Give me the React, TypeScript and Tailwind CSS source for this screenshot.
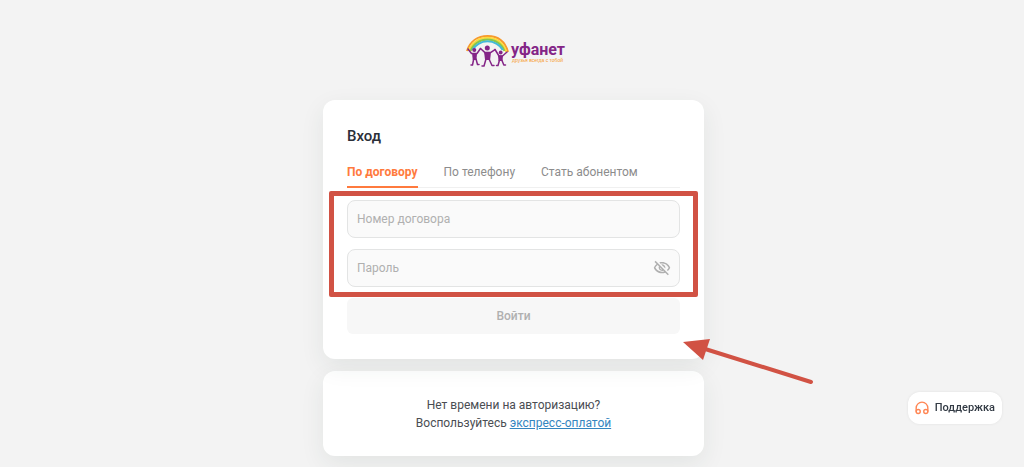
import { useState } from "react";
import clsx from "clsx";

const tabs = ["По договору", "По телефону", "Стать абонентом"];

function Logo() {
  return (
    <a href="#" aria-label="Уфанет" className="flex w-24 shrink-0">
      <svg viewBox="0 0 96 34" className="h-[34px] w-24 overflow-visible">
        <g fill="none" strokeWidth="2">
          <path d="M1 17C4 7 12 2 21.500 2S39 7 42 18" stroke="#f79a2c" />
          <path d="M2.800 17C5.500 8.500 13 3.800 21.500 3.800S37.500 8.500 40.200 18" stroke="#fddb3a" />
          <path d="M4.600 17C7 10 14 5.600 21.500 5.600S36 10 38.400 17" stroke="#8ac64a" />
          <path d="M6.400 16C9 11 15 7.300 21.500 7.300S34.500 11 36.800 16" stroke="#43b9d8" />
        </g>
        <g fill="#842587">
          <circle cx="8.300" cy="16" r="2" />
          <circle cx="21.300" cy="14" r="2.500" />
          <circle cx="34.700" cy="18.500" r="1.900" />
          <path d="M6 19h5l-.5 7H6.800z" />
          <path d="M18 18h7l-.9 8h-5z" />
          <path d="M32 21.500h5l-.5 5.500h-4z" />
        </g>
        <g fill="none" stroke="#842587" strokeWidth="1.500" strokeLinecap="round" strokeLinejoin="round">
          <path d="M2 15l3.500 4.500H11l3.500-5" />
          <path d="M7.700 25L6.500 31H5M10 25l1.500 5.500H13" />
          <path d="M14.500 14.500L19 18.600h5.500l4.500-3" />
          <path d="M20 25l-2 7h-2M23 25l3 6.500h2" />
          <path d="M29 15.500l4 6.500h3.500l4.500-4" />
          <path d="M33.500 26L32 31.500h-1.500M35.800 26l2 5H39.500" />
        </g>
        <text x="45" y="21" fontSize="16" fontWeight="700" fill="#842587" fontFamily="Roboto, sans-serif">
          уфанет
        </text>
        <text x="46" y="28" fontSize="5" fill="#f79a2c" fontFamily="'Liberation Sans', sans-serif">
          друзья всегда с тобой
        </text>
      </svg>
    </a>
  );
}

function EyeOffIcon() {
  return (
    <svg viewBox="0 0 24 24" className="size-[18px]" fill="currentColor">
      <path d="M12 6c3.790 0 7.170 2.130 8.820 5.500-.59 1.220-1.420 2.270-2.410 3.120l1.410 1.410c1.390-1.230 2.490-2.770 3.180-4.530C21.270 7.110 17 4 12 4c-1.270 0-2.490.2-3.640.57l1.650 1.650C10.660 6.090 11.320 6 12 6zm-1.070 1.140L13 9.210c.57.25 1.030.71 1.280 1.280l2.070 2.070c.08-.34.14-.7.14-1.070C16.500 9.010 14.480 7 12 7c-.37 0-.72.05-1.070.14zM2.010 3.870l2.680 2.680C3.060 7.830 1.770 9.530 1 11.500 2.730 15.890 7 19 12 19c1.520 0 2.980-.29 4.320-.82l3.420 3.420 1.410-1.410L3.420 2.450 2.010 3.870zm7.500 7.500l2.610 2.610c-.04.01-.08.02-.12.02-1.380 0-2.500-1.120-2.500-2.500 0-.05.01-.08.01-.13zm-3.400-3.400l1.750 1.750c-.23.55-.36 1.150-.36 1.780 0 2.480 2.020 4.500 4.500 4.500.63 0 1.230-.13 1.770-.36l.98.98c-.88.24-1.800.38-2.750.38-3.790 0-7.170-2.130-8.820-5.500.7-1.430 1.720-2.610 2.930-3.530z" />
    </svg>
  );
}

function SupportButton() {
  return (
    <button
      type="button"
      className="fixed right-[22px] bottom-[43px] flex h-8 items-center gap-1.5 rounded-xl bg-white px-[7px] text-[11px] font-medium text-[#333b45] shadow-[0_0_3px_rgba(0,0,0,0.08)]"
    >
      <svg viewBox="0 0 24 24" className="size-3.5" fill="none" stroke="#ff8654" strokeWidth="2.400" strokeLinecap="round" strokeLinejoin="round">
        <path d="M2 17.500V12a10 10 0 0 1 20 0v5.500" />
        <circle cx="5.500" cy="18" r="3.500" />
        <circle cx="18.500" cy="18" r="3.500" />
      </svg>
      Поддержка
    </button>
  );
}

export default function App() {
  const [activeTab, setActiveTab] = useState(0);
  const [showPassword, setShowPassword] = useState(false);

  return (
    <div className="min-h-screen bg-[#f3f3f3] font-['Roboto',sans-serif] text-xs">
      <main className="flex flex-col items-center pt-[34px] pb-2.5 pl-[3px]">
        <Logo />

        <section className="relative mt-8 w-full max-w-[381px] rounded-xl bg-white px-6 pt-6 pb-[25px] shadow-[0_8px_24px_rgba(40,60,50,0.08)]">
          <h1 className="text-[15px] leading-6 font-medium text-[#2b2f38]">Вход</h1>

          <div role="tablist" className="mt-3 flex gap-[26px] border-b border-[#f0f0f0]">
            {tabs.map((tab, index) => (
              <button
                key={tab}
                type="button"
                role="tab"
                aria-selected={index === activeTab}
                onClick={() => setActiveTab(index)}
                className={clsx(
                  "-mb-px h-7 border-b-2 pb-0.5",
                  index === activeTab
                    ? "border-b-[#ff7a3d] font-bold text-[#ff7a3d]"
                    : "border-b-transparent text-[#8c8c8c]"
                )}
              >
                {tab}
              </button>
            ))}
          </div>

          <form className="mt-3" onSubmit={(e) => e.preventDefault()}>
            <div className="relative flex flex-col gap-[11px]">
              <input
                type="text"
                aria-label="Номер договора"
                placeholder="Номер договора"
                className="h-[38px] w-full rounded-lg border border-[#e3e4e4] bg-[#fafafa] px-[9px] placeholder:text-[#b0b0b0]"
              />
              <div className="relative flex">
                <input
                  type={showPassword ? "text" : "password"}
                  aria-label="Пароль"
                  placeholder="Пароль"
                  className="h-[38px] w-full rounded-lg border border-[#e3e4e4] bg-[#fafafa] pr-9 pl-[9px] placeholder:text-[#b0b0b0]"
                />
                <button
                  type="button"
                  aria-label="Показать пароль"
                  onClick={() => setShowPassword(!showPassword)}
                  className="absolute inset-y-0 right-[9px] text-[#b0b0b0]"
                >
                  <EyeOffIcon />
                </button>
              </div>
              {/* highlight around the credentials */}
              <div className="pointer-events-none absolute -inset-x-[18px] -top-[9px] -bottom-2.5 rounded-xs border-5 border-[#d15244]" />
            </div>

            <button type="submit" className="mt-[11px] h-9 w-full rounded-md bg-[#f7f7f7] font-medium text-[#b0b0b0]">
              Войти
            </button>
          </form>

          {/* arrow pointing at the form */}
          <svg viewBox="0 0 132 48" className="pointer-events-none absolute -right-[110px] -bottom-7 z-10 h-12 w-[132px]">
            <path d="M20 9L129 43" stroke="#d15244" strokeWidth="4" strokeLinecap="round" />
            <path d="M1 3L28 0L21 21Z" fill="#d15244" />
          </svg>
        </section>

        <section className="mt-3 w-full max-w-[381px] rounded-xl bg-white px-6 pt-[25px] pb-6 text-center leading-[18px] text-[#4a4d52] shadow-[0_8px_24px_rgba(40,60,50,0.08)]">
          <p>Нет времени на авторизацию?</p>
          <p>
            Воспользуйтесь{" "}
            <a href="#" className="text-[#3485bf] underline">
              экспресс-оплатой
            </a>
          </p>
        </section>
      </main>

      <SupportButton />
    </div>
  );
}
